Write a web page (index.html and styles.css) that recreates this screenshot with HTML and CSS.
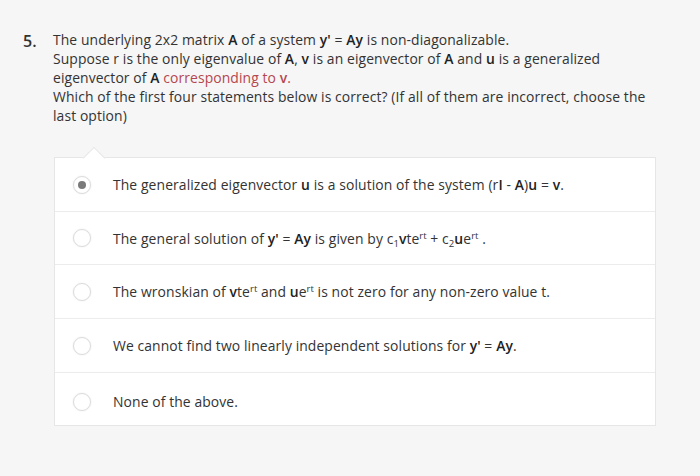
FILE: index.html
```html
<!DOCTYPE html>
<html>
<head>
<meta charset="utf-8">
<link rel="stylesheet" href="styles.css">
</head>
<body>
<div class="page">
  <div class="question">
    <div class="qnum">5.</div>
    <div class="qtext">
      The underlying 2x2 matrix <b>A</b> of a system <b>y'</b> = <b>Ay</b> is non-diagonalizable.<br>
      Suppose r is the only eigenvalue of <b>A</b>, <b>v</b> is an eigenvector of <b>A</b> and <b>u</b> is a generalized eigenvector of <b>A</b> <span class="red">corresponding to <b>v</b>.</span><br>
      Which of the first four statements below is correct? (If all of them are incorrect, choose the last option)
    </div>
  </div>
  <div class="card">
    <div class="notch"></div>
    <div class="row r1">
      <span class="radio checked"></span>
      <span class="opt">The generalized eigenvector <b>u</b> is a solution of the system (r<b>I</b> - <b>A</b>)<b>u</b> = <b>v</b>.</span>
    </div>
    <div class="row r2">
      <span class="radio"></span>
      <span class="opt">The general solution of <b>y'</b> = <b>Ay</b> is given by c<sub>1</sub><b>v</b>te<sup>rt</sup> + c<sub>2</sub><b>u</b>e<sup>rt</sup> .</span>
    </div>
    <div class="row r3">
      <span class="radio"></span>
      <span class="opt">The wronskian of <b>v</b>te<sup>rt</sup> and <b>u</b>e<sup>rt</sup> is not zero for any non-zero value t.</span>
    </div>
    <div class="row r4">
      <span class="radio"></span>
      <span class="opt">We cannot find two linearly independent solutions for <b>y'</b> = <b>Ay</b>.</span>
    </div>
    <div class="row r5">
      <span class="radio"></span>
      <span class="opt">None of the above.</span>
    </div>
  </div>
</div>
</body>
</html>
```
FILE: styles.css
```css
html, body {
  margin: 0;
  padding: 0;
  background: #f6f6f6;
}
.page {
  width: 700px;
  height: 476px;
  font-family: "Open Sans", "Noto Sans", sans-serif;
  color: #333;
  font-size: 13.9px;
  letter-spacing: 0.1px;
  padding-top: 30px;
  box-sizing: border-box;
}
b { font-weight: 600; color: #222; }
.question {
  display: flex;
  align-items: flex-start;
}
.qnum {
  width: 30px;
  margin-left: 23px;
  font-size: 16px;
  font-weight: 600;
  line-height: 19px;
  padding-top: 2px;
  color: #333;
  letter-spacing: 0;
}
.qtext {
  width: 600px;
  line-height: 19px;
}
.red { color: #b5474f; }
.red b { color: #b5474f; }
.card {
  position: relative;
  margin-top: 32px;
  margin-left: 54px;
  width: 602px;
  background: #fff;
  border: 1px solid #e6e6e6;
  box-sizing: border-box;
}
.notch {
  position: absolute;
  top: -8px;
  left: 31px;
  width: 15px;
  height: 15px;
  background: #fff;
  border-left: 1px solid #e6e6e6;
  border-top: 1px solid #e6e6e6;
  transform: rotate(45deg);
}
.row {
  position: relative;
  display: flex;
  align-items: center;
  height: 53px;
  padding-left: 18px;
  border-top: 1px solid #ececec;
}
.row.r1 { border-top: none; height: 53px; }
.row.r2 { height: 52px; }
.row.r5 { padding-top: 5px; box-sizing: border-box; height: 53px; }
.radio {
  width: 18px;
  height: 18px;
  border-radius: 50%;
  border: 1px solid #dcdcdc;
  box-shadow: 0 0 2px #eaeaea;
  box-sizing: border-box;
  flex: none;
  display: flex;
  align-items: center;
  justify-content: center;
  background: #fff;
}
.radio.checked::after {
  content: "";
  width: 8px;
  height: 8px;
  border-radius: 50%;
  background: #7a7a7a;
}
.opt {
  margin-left: 22px;
  line-height: 19px;
}
sup, sub {
  font-size: 9.5px;
  line-height: 0;
  letter-spacing: 0;
}
sup { vertical-align: 5px; }
sub { vertical-align: -3px; }
```
